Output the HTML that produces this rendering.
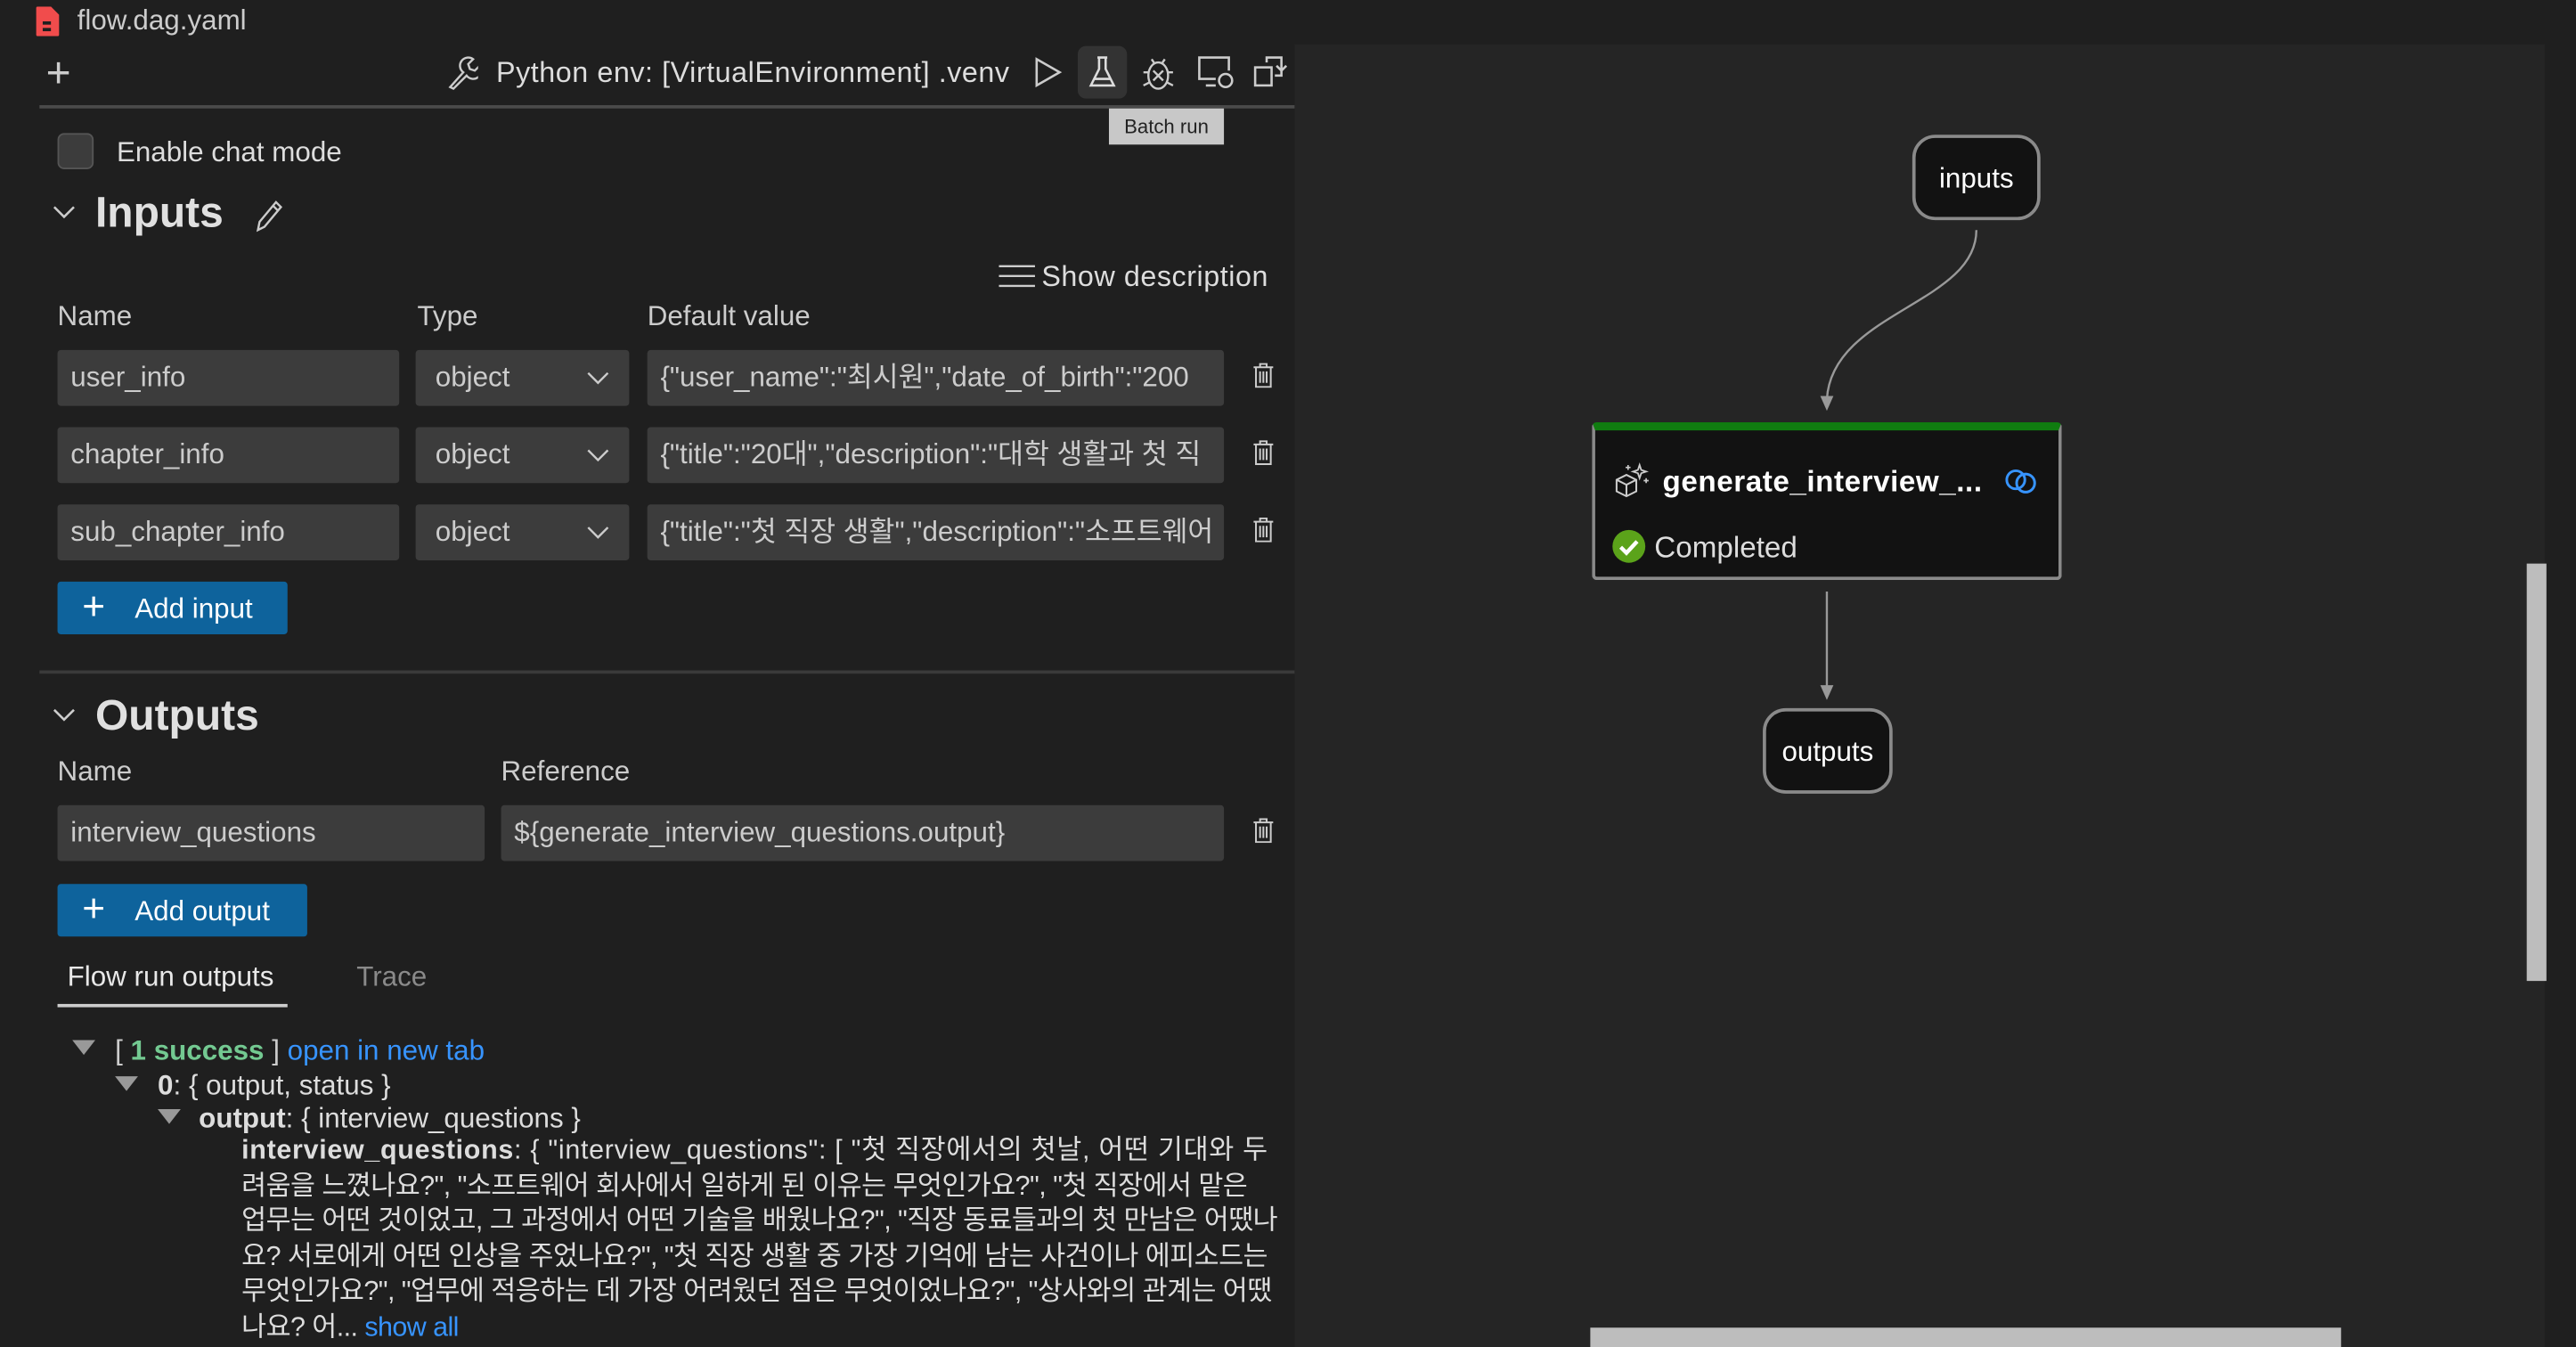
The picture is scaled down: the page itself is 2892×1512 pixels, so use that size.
<!DOCTYPE html>
<html><head><meta charset="utf-8"><style>
html,body{margin:0;padding:0;background:#1f1f1f;width:2892px;height:1512px;overflow:hidden}
#w{position:absolute;left:0;top:0;width:1568px;height:820px;transform:scale(1.8444);transform-origin:0 0;font-family:"Liberation Sans","Noto Sans CJK KR",sans-serif;color:#cccccc;font-size:17px}
.a{position:absolute;white-space:nowrap}
.f{position:absolute;background:#3c3c3c;border-radius:2px;height:34px;line-height:34px;padding-left:8px;box-sizing:border-box;overflow:hidden;white-space:nowrap;color:#cccccc;font-size:17px}
.btn{position:absolute;background:#0e639c;color:#fff;height:32px;line-height:32px;border-radius:2px;font-size:17px}
.trash{position:absolute;width:12px;height:15px}
.node{position:absolute;background:#121212;border:2px solid #8a8a8a;color:#fff;text-align:center;font-size:17px}
</style></head><body><div id="w">
<div class="a" style="left:788px;top:27px;width:761px;height:793px;background:#252525"></div>
<div class="a" style="left:1538px;top:343px;width:12px;height:254px;background:#bdbdbd"></div>
<div class="a" style="left:968px;top:808px;width:457px;height:12px;background:#bdbdbd"></div>

<svg class="a" style="left:22px;top:4px" width="14" height="18" viewBox="0 0 14 18"><path d="M1 0h8l5 5v12a1 1 0 0 1-1 1H1a1 1 0 0 1-1-1V1a1 1 0 0 1 1-1z" fill="#f14c4c"/><rect x="4" y="9" width="5" height="2" fill="#1f1f1f"/><rect x="4" y="13" width="5" height="2" fill="#1f1f1f"/></svg>
<div class="a" style="left:47px;top:3px;font-size:17px;color:#cccccc">flow.dag.yaml</div>

<div class="a" style="left:28px;top:29px;font-size:26px;font-weight:300;color:#ccc;line-height:30px">+</div>
<svg class="a" style="left:271px;top:33px" width="20" height="22" viewBox="0 0 20 22"><path d="M3 20l8-9a5 5 0 0 1 6-8l-3 3 1 3 3 1 3-3a5 5 0 0 1-8 6l-8 8z" fill="none" stroke="#ccc" stroke-width="1.3"/></svg>
<div class="a" style="left:302px;top:34px;font-size:17.5px;letter-spacing:0.3px;color:#ddd">Python env: [VirtualEnvironment] .venv</div>
<svg class="a" style="left:628px;top:34px" width="20" height="20" viewBox="0 0 20 20"><path d="M3 2l14 8-14 8z" fill="none" stroke="#ccc" stroke-width="1.4"/></svg>
<div class="a" style="left:656px;top:28px;width:30px;height:32px;background:#333;border-radius:5px"></div>
<svg class="a" style="left:661px;top:33px" width="20" height="22" viewBox="0 0 20 22"><path d="M7 2h6M8 2v7L3 19h14L12 9V2M5 15h10" fill="none" stroke="#ddd" stroke-width="1.4"/></svg>
<svg class="a" style="left:694px;top:32px" width="22" height="24" viewBox="0 0 22 24"><ellipse cx="11" cy="14" rx="6" ry="8" fill="none" stroke="#ccc" stroke-width="1.3"/><path d="M7 4l2 3M15 4l-2 3M2 12h3M17 12h3M2 20l4-2M20 20l-4-2M8 11l6 6M14 11l-6 6" stroke="#ccc" stroke-width="1.3"/></svg>
<svg class="a" style="left:728px;top:33px" width="24" height="22" viewBox="0 0 24 22"><path d="M12 15H2V2h18v8M6 19h6" fill="none" stroke="#ccc" stroke-width="1.4"/><circle cx="18" cy="16" r="4" fill="none" stroke="#ccc" stroke-width="1.4"/></svg>
<svg class="a" style="left:762px;top:33px" width="22" height="22" viewBox="0 0 22 22"><rect x="2" y="8" width="10" height="11" fill="none" stroke="#ccc" stroke-width="1.4"/><path d="M9 5V2h9v11h-4M15 7l3 3 3-3" fill="none" stroke="#ccc" stroke-width="1.4"/></svg>
<div class="a" style="left:24px;top:64px;width:764px;height:2px;background:#4a4a4a"></div>
<div class="a" style="left:675px;top:66px;width:70px;height:22px;background:#c8c8c8;color:#222;font-size:12px;line-height:22px;text-align:center">Batch run</div>

<div class="a" style="left:35px;top:81px;width:22px;height:22px;background:#3c3c3c;border:1px solid #555;border-radius:4px;box-sizing:border-box"></div>
<div class="a" style="left:71px;top:83px;font-size:17px;color:#ddd">Enable chat mode</div>

<svg class="a" style="left:32px;top:124px" width="14" height="10" viewBox="0 0 14 10"><path d="M1 2l6 6 6-6" fill="none" stroke="#ccc" stroke-width="1.4"/></svg>
<div class="a" style="left:58px;top:114px;font-size:26px;font-weight:bold;color:#e0e0e0">Inputs</div>
<svg class="a" style="left:154px;top:120px" width="20" height="22" viewBox="0 0 20 22"><path d="M3 20l1-5L14 3l3 3L7 18z M12 5l3 3" fill="none" stroke="#ccc" stroke-width="1.3"/></svg>
<svg class="a" style="left:608px;top:161px" width="22" height="14" viewBox="0 0 22 14"><path d="M0 1h22M0 7h22M0 13h22" stroke="#ccc" stroke-width="1.3"/></svg>
<div class="a" style="left:634px;top:158px;font-size:17.5px;letter-spacing:0.3px;color:#ddd">Show description</div>

<div class="a" style="left:35px;top:183px">Name</div>
<div class="a" style="left:254px;top:183px">Type</div>
<div class="a" style="left:394px;top:183px">Default value</div>

<div class="f" style="left:35px;top:213px;width:208px">user_info</div>
<div class="f" style="left:253px;top:213px;width:130px;padding-left:12px">object</div>
<div class="f" style="left:394px;top:213px;width:351px">{"user_name":"최시원","date_of_birth":"200</div>
<div class="f" style="left:35px;top:260px;width:208px">chapter_info</div>
<div class="f" style="left:253px;top:260px;width:130px;padding-left:12px">object</div>
<div class="f" style="left:394px;top:260px;width:351px">{"title":"20대","description":"대학 생활과 첫 직</div>
<div class="f" style="left:35px;top:307px;width:208px">sub_chapter_info</div>
<div class="f" style="left:253px;top:307px;width:130px;padding-left:12px">object</div>
<div class="f" style="left:394px;top:307px;width:351px">{"title":"첫 직장 생활","description":"소프트웨어</div>

<svg class="a" style="left:357px;top:226px" width="14" height="9" viewBox="0 0 14 9"><path d="M1 1l6 6 6-6" fill="none" stroke="#ccc" stroke-width="1.3"/></svg>
<svg class="a" style="left:357px;top:273px" width="14" height="9" viewBox="0 0 14 9"><path d="M1 1l6 6 6-6" fill="none" stroke="#ccc" stroke-width="1.3"/></svg>
<svg class="a" style="left:357px;top:320px" width="14" height="9" viewBox="0 0 14 9"><path d="M1 1l6 6 6-6" fill="none" stroke="#ccc" stroke-width="1.3"/></svg>

<svg class="trash" style="left:763px;top:221px" viewBox="0 0 12 15"><path d="M0 2.5h12M4 2.5V0.5h4v2M1.5 2.5v12h9v-12M4 5v7M6 5v7M8 5v7" fill="none" stroke="#ccc" stroke-width="1.1"/></svg>
<svg class="trash" style="left:763px;top:268px" viewBox="0 0 12 15"><path d="M0 2.5h12M4 2.5V0.5h4v2M1.5 2.5v12h9v-12M4 5v7M6 5v7M8 5v7" fill="none" stroke="#ccc" stroke-width="1.1"/></svg>
<svg class="trash" style="left:763px;top:315px" viewBox="0 0 12 15"><path d="M0 2.5h12M4 2.5V0.5h4v2M1.5 2.5v12h9v-12M4 5v7M6 5v7M8 5v7" fill="none" stroke="#ccc" stroke-width="1.1"/></svg>

<div class="btn" style="left:35px;top:354px;width:140px"><span style="position:absolute;left:15px;top:0px;font-size:24px;font-weight:300">+</span><span style="position:absolute;left:47px;top:1px">Add input</span></div>

<div class="a" style="left:24px;top:408px;width:764px;height:2px;background:#3a3a3a"></div>

<svg class="a" style="left:32px;top:430px" width="14" height="10" viewBox="0 0 14 10"><path d="M1 2l6 6 6-6" fill="none" stroke="#ccc" stroke-width="1.4"/></svg>
<div class="a" style="left:58px;top:420px;font-size:26px;font-weight:bold;color:#e0e0e0">Outputs</div>
<div class="a" style="left:35px;top:460px">Name</div>
<div class="a" style="left:305px;top:460px">Reference</div>
<div class="f" style="left:35px;top:490px;width:260px">interview_questions</div>
<div class="f" style="left:305px;top:490px;width:440px">${generate_interview_questions.output}</div>
<svg class="trash" style="left:763px;top:498px" viewBox="0 0 12 15"><path d="M0 2.5h12M4 2.5V0.5h4v2M1.5 2.5v12h9v-12M4 5v7M6 5v7M8 5v7" fill="none" stroke="#ccc" stroke-width="1.1"/></svg>
<div class="btn" style="left:35px;top:538px;width:152px"><span style="position:absolute;left:15px;top:0px;font-size:24px;font-weight:300">+</span><span style="position:absolute;left:47px;top:1px">Add output</span></div>

<div class="a" style="left:41px;top:585px;color:#e8e8e8">Flow run outputs</div>
<div class="a" style="left:35px;top:611px;width:140px;height:2px;background:#ccc"></div>
<div class="a" style="left:217px;top:585px;color:#8a8a8a">Trace</div>

<div class="a" style="left:44px;top:633px;width:0;height:0;border-left:7px solid transparent;border-right:7px solid transparent;border-top:9px solid #999"></div>
<div class="a" style="left:70px;top:630px">[ <b style="color:#73c991">1 success</b> ] <span style="color:#3794ff">open in new tab</span></div>
<div class="a" style="left:70px;top:655px;width:0;height:0;border-left:7px solid transparent;border-right:7px solid transparent;border-top:9px solid #999"></div>
<div class="a" style="left:96px;top:651px;color:#ddd"><b>0</b>: { output, status }</div>
<div class="a" style="left:96px;top:675px;width:0;height:0;border-left:7px solid transparent;border-right:7px solid transparent;border-top:9px solid #999"></div>
<div class="a" style="left:121px;top:671px;color:#ddd"><b>output</b>: { interview_questions }</div>
<div class="a" style="left:147px;top:690px;color:#ddd;line-height:21.5px;font-size:16.5px;letter-spacing:-0.3px"><span style="letter-spacing:0.38px"><b>interview_questions</b>: { "interview_questions": [ "첫 직장에서의 첫날, 어떤 기대와 두</span><br>려움을 느꼈나요?", "소프트웨어 회사에서 일하게 된 이유는 무엇인가요?", "첫 직장에서 맡은<br>업무는 어떤 것이었고, 그 과정에서 어떤 기술을 배웠나요?", "직장 동료들과의 첫 만남은 어땠나<br>요? 서로에게 어떤 인상을 주었나요?", "첫 직장 생활 중 가장 기억에 남는 사건이나 에피소드는<br>무엇인가요?", "업무에 적응하는 데 가장 어려웠던 점은 무엇이었나요?", "상사와의 관계는 어땠<br>나요? 어... <span style="color:#3794ff">show all</span></div>

<div class="node" style="left:1164px;top:82px;width:78px;height:52px;line-height:50px;border-radius:14px;box-sizing:border-box">inputs</div>
<svg class="a" style="left:1100px;top:135px" width="120" height="120" viewBox="0 0 120 120"><path d="M103 5C103 50 15 55 12 108" fill="none" stroke="#999" stroke-width="1.3"/><path d="M8 106l4 9 4-9z" fill="#999"/></svg>
<div class="a" style="left:969px;top:257px;width:286px;height:96px;background:#121212;border:2px solid #8a8a8a;border-top:5px solid #107c10;border-radius:3px;box-sizing:border-box"></div>
<svg class="a" style="left:982px;top:281px" width="22" height="22" viewBox="0 0 22 22"><path d="M2 11l6-3 6 3v7l-6 3-6-3zM2 11l6 3 6-3M8 14v7" fill="none" stroke="#ccc" stroke-width="1.1"/><path d="M16 2l1 3 3 1-3 1-1 3-1-3-3-1 3-1z" fill="none" stroke="#ccc" stroke-width="1"/><path d="M9 2v3M7.5 3.5h3M20 10v3M18.5 11.5h3" stroke="#ccc" stroke-width="0.9"/></svg>
<div class="a" style="left:1012px;top:283px;font-size:18px;font-weight:bold;color:#fff;letter-spacing:0.3px">generate_interview_...</div>
<svg class="a" style="left:1219px;top:284px" width="22" height="18" viewBox="0 0 22 18"><circle cx="8" cy="8" r="5.5" fill="none" stroke="#3794ff" stroke-width="1.6"/><circle cx="14" cy="10" r="5.5" fill="none" stroke="#3794ff" stroke-width="1.6"/></svg>
<svg class="a" style="left:981px;top:322px" width="21" height="21" viewBox="0 0 21 21"><circle cx="10.5" cy="10.5" r="10" fill="#5ba31a"/><path d="M5.5 11l3.5 3.5 6.5-7" fill="none" stroke="#fff" stroke-width="2.4"/></svg>
<div class="a" style="left:1007px;top:323px;font-size:18px;color:#ddd">Completed</div>
<svg class="a" style="left:1105px;top:360px" width="14" height="68" viewBox="0 0 14 68"><path d="M7 0v58" stroke="#999" stroke-width="1.3"/><path d="M3 57l4 9 4-9z" fill="#999"/></svg>
<div class="node" style="left:1073px;top:431px;width:79px;height:52px;line-height:50px;border-radius:14px;box-sizing:border-box">outputs</div>
</div></body></html>
